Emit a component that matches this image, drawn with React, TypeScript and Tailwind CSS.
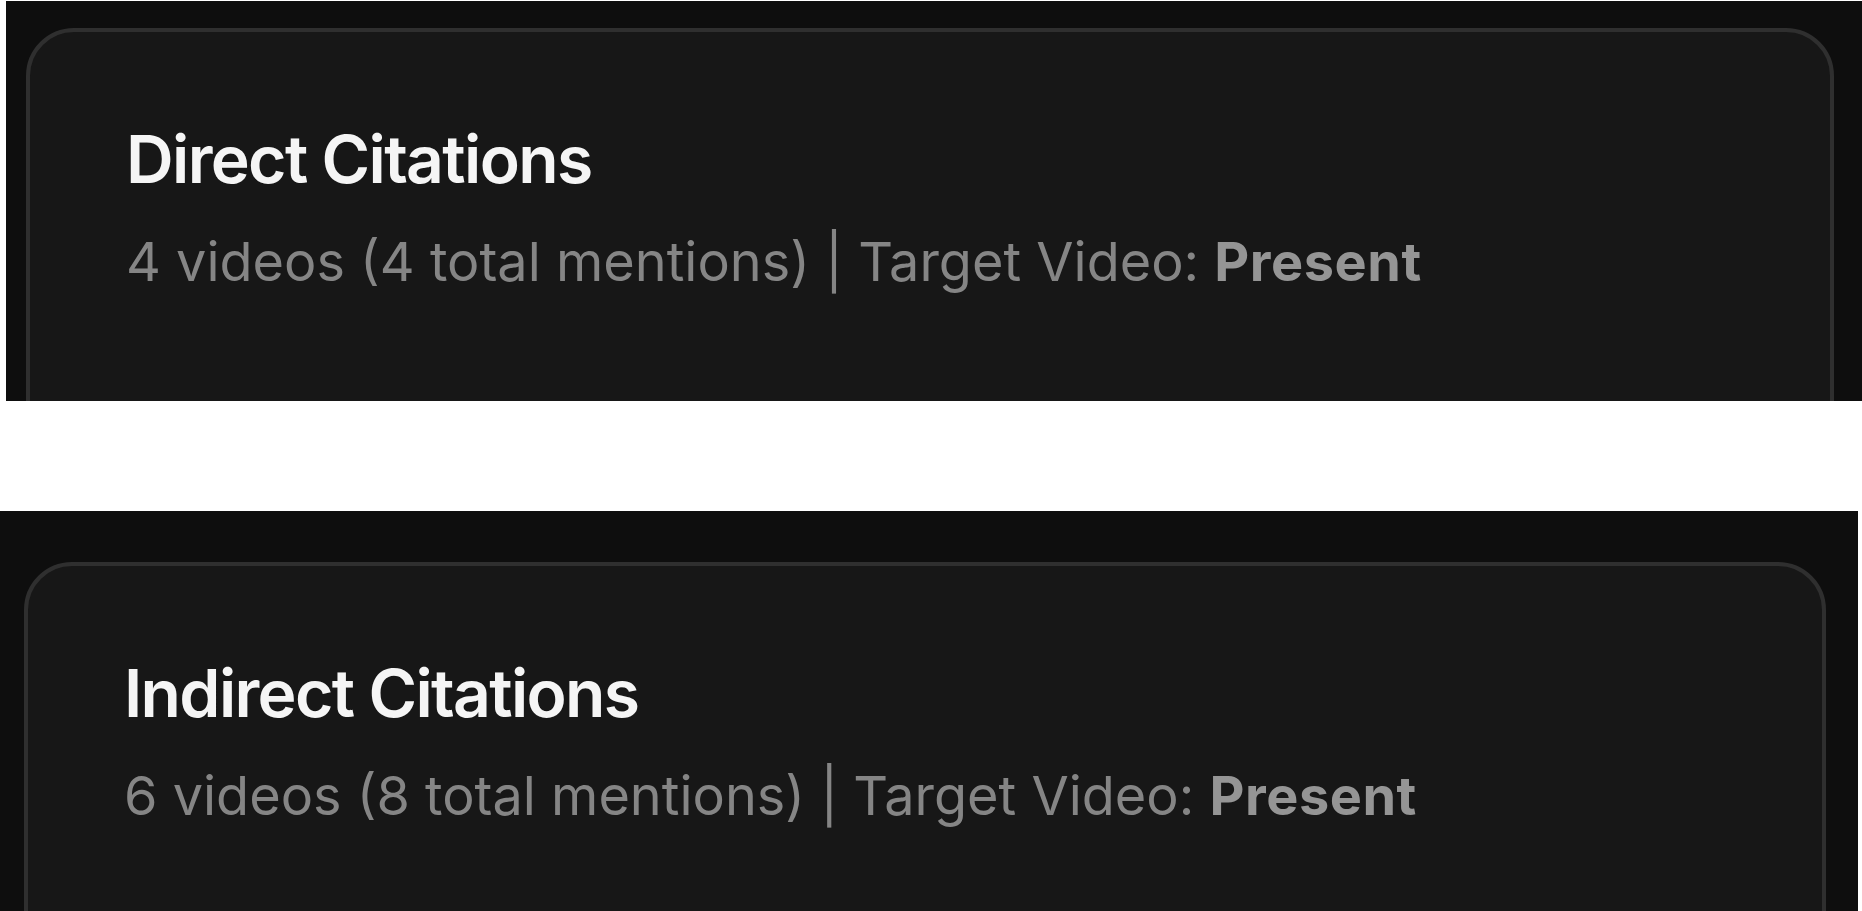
import React from 'react';

type CitationCardProps = {
  title: string;
  videos: number;
  mentions: number;
  status: string;
};

function CitationCard({ title, videos, mentions, status }: CitationCardProps) {
  return (
    <div className="h-[440px] rounded-[48px] border-4 border-[#2f2f2f] bg-[#171717] pl-[96px] pt-[94px]">
      <h3 className="text-[66px] leading-[66px] font-semibold tracking-[-0.025em] text-[#f5f5f5]">{title}</h3>
      <p className="mt-[42px] text-[54px] leading-[55px] text-[#858585]">
        {videos} videos ({mentions} total mentions) | Target Video:{' '}
        <span className="font-bold tracking-[0.01em] text-[#959595]">{status}</span>
      </p>
    </div>
  );
}

export default function App() {
  return (
    <div className="min-h-screen bg-white font-['Inter','Liberation_Sans',sans-serif]">
      {/* Direct citations panel */}
      <section className="mt-[1px] ml-[6px] h-[400px] overflow-hidden bg-[#0e0e0e] pl-[20px] pr-[28px] pt-[27px]">
        <CitationCard title="Direct Citations" videos={4} mentions={4} status="Present" />
      </section>

      {/* Indirect citations panel */}
      <section className="mt-[110px] mr-[4px] h-[400px] overflow-hidden bg-[#0e0e0e] pl-[24px] pr-[32px] pt-[51px]">
        <CitationCard title="Indirect Citations" videos={6} mentions={8} status="Present" />
      </section>
    </div>
  );
}
